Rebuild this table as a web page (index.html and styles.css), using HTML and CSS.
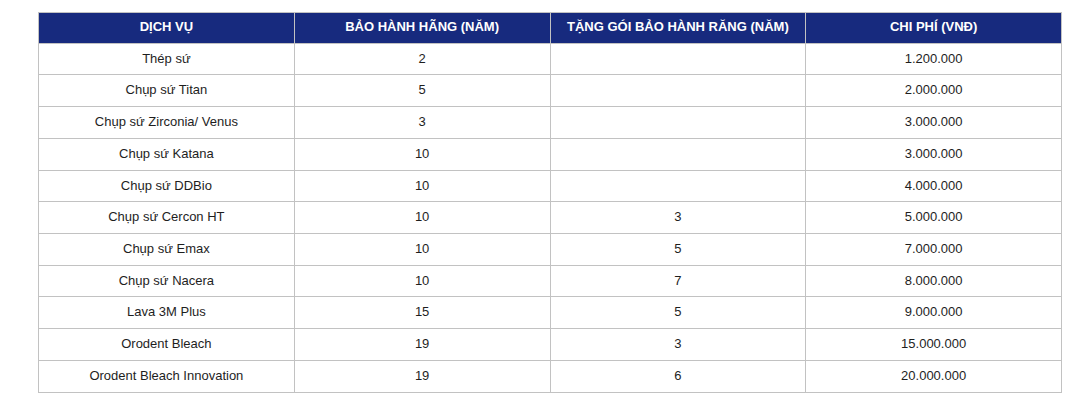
FILE: index.html
```html
<!DOCTYPE html>
<html lang="vi">
<head>
<meta charset="utf-8">
<title>Bảng giá</title>
<link rel="stylesheet" href="styles.css">
</head>
<body>
<div class="wrap">
<table class="price">
<thead>
<tr><th>DỊCH VỤ</th><th>BẢO HÀNH HÃNG (NĂM)</th><th>TẶNG GÓI BẢO HÀNH RĂNG (NĂM)</th><th>CHI PHÍ (VNĐ)</th></tr>
</thead>
<tbody>
<tr><td>Thép sứ</td><td>2</td><td></td><td>1.200.000</td></tr>
<tr><td>Chụp sứ Titan</td><td>5</td><td></td><td>2.000.000</td></tr>
<tr><td>Chụp sứ Zirconia/ Venus</td><td>3</td><td></td><td>3.000.000</td></tr>
<tr><td>Chụp sứ Katana</td><td>10</td><td></td><td>3.000.000</td></tr>
<tr><td>Chụp sứ DDBio</td><td>10</td><td></td><td>4.000.000</td></tr>
<tr><td>Chụp sứ Cercon HT</td><td>10</td><td>3</td><td>5.000.000</td></tr>
<tr><td>Chụp sứ Emax</td><td>10</td><td>5</td><td>7.000.000</td></tr>
<tr><td>Chụp sứ Nacera</td><td>10</td><td>7</td><td>8.000.000</td></tr>
<tr><td>Lava 3M Plus</td><td>15</td><td>5</td><td>9.000.000</td></tr>
<tr><td>Orodent Bleach</td><td>19</td><td>3</td><td>15.000.000</td></tr>
<tr><td>Orodent Bleach Innovation</td><td>19</td><td>6</td><td>20.000.000</td></tr>
</tbody>
</table>
</div>
</body>
</html>
```
FILE: styles.css
```css
html, body {
  margin: 0;
  padding: 0;
  background: #fff;
}
body {
  font-family: "Liberation Sans", Arial, sans-serif;
  font-size: 13px;
  line-height: 1.44;
  color: #1e1e1e;
}
.wrap {
  padding: 12px 0 0 38px;
}
.price {
  width: 1024px;
  border-collapse: collapse;
  table-layout: fixed;
}
.price th,
.price td {
  width: 25%;
  border: 1px solid #c2c2c2;
  padding: 6px 8px;
  text-align: center;
  vertical-align: middle;
}
.price th {
  background: #172a7e;
  color: #fff;
  font-weight: bold;
  padding: 5px 8px 6px;
}
```
